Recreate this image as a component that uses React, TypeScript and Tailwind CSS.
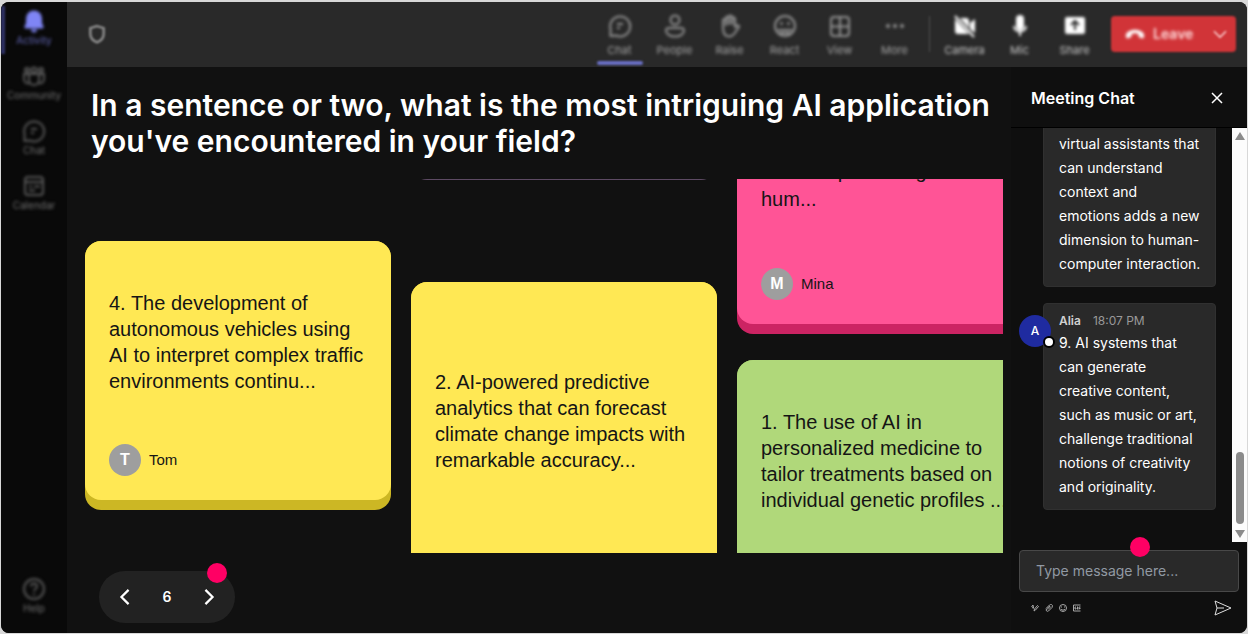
import { ReactNode } from "react";

type NoteProps = {
  text: string;
  author?: string;
  face: string;
  edge: string;
  className?: string;
  leading?: string;
};

function Note({ text, author, face, edge, className = "", leading = "leading-[26px]" }: NoteProps) {
  return (
    <article className={`shrink-0 rounded-[16px] pb-[10px] ${edge} ${className}`}>
      <div className={`flex h-full flex-col rounded-[16px] p-6 ${face}`}>
        <div className="flex flex-1 items-center">
          <p className={`text-xl text-[#151515] ${leading}`}>{text}</p>
        </div>
        <div className="mt-[26px] flex min-h-8 items-center gap-2 text-[15px] text-[#151515]">
          {author && (
            <>
              <span className="flex size-8 items-center justify-center rounded-full bg-[#9e9e9e] text-base font-bold text-white">
                {author[0]}
              </span>
              {author}
            </>
          )}
        </div>
      </div>
    </article>
  );
}

function BellIcon() {
  return (
    <svg viewBox="0 0 24 24" className="size-6" fill="currentColor" aria-hidden="true">
      <path d="M12 1.500a8 8 0 0 0-8 8v4.500l-1.500 3.500c-.4 1 .2 2 1.200 2h16.600c1 0 1.600-1 1.200-2L20 14V9.500a8 8 0 0 0-8-8Z" />
      <path d="M9 20.500h6a3 3 0 0 1-6 0Z" />
    </svg>
  );
}

function CommunityIcon() {
  return (
    <svg viewBox="0 0 24 24" className="size-6" fill="none" stroke="currentColor" strokeWidth="2" aria-hidden="true">
      <circle cx="5" cy="6" r="2" />
      <circle cx="12" cy="6" r="2.500" />
      <circle cx="19" cy="6" r="2" />
      <path d="M7 10h10v6a5 5 0 0 1-10 0ZM7 10H2v5c0 3 2 5 5.500 4M17 10h5v5c0 3-2 5-5.500 4" />
    </svg>
  );
}

function CalendarIcon() {
  return (
    <svg viewBox="0 0 24 24" className="size-6" fill="none" stroke="currentColor" strokeWidth="2" aria-hidden="true">
      <rect x="3" y="3" width="18" height="18" rx="3" />
      <path d="M3 8h18M7 12.500h3M12 12.500h6M7 16.500h6" />
    </svg>
  );
}

function HelpIcon() {
  return (
    <svg viewBox="0 0 24 24" className="size-6" fill="none" stroke="currentColor" strokeWidth="2" aria-hidden="true">
      <circle cx="12" cy="12" r="10" />
      <path d="M9 9.500c0-4 6-4 6 0 0 2.500-3 2-3 5M12 16.500v2" />
    </svg>
  );
}

function ChatIcon() {
  return (
    <svg viewBox="0 0 24 24" className="size-6" fill="none" stroke="currentColor" strokeWidth="2" strokeLinejoin="round" aria-hidden="true">
      <path d="M2.500 22 2.500 15A10 10 0 1 1 8 21.500Z" />
      <path d="M9 10h6M9 14h3" />
    </svg>
  );
}

function PeopleIcon() {
  return (
    <svg viewBox="0 0 24 24" className="size-6" fill="none" stroke="currentColor" strokeWidth="2" aria-hidden="true">
      <circle cx="12" cy="6" r="4.500" />
      <path d="M5.500 14h13a2.500 2.500 0 0 1 2.500 2.500C21 20 17 22.500 12 22.500S3 20 3 16.500A2.500 2.500 0 0 1 5.500 14Z" />
    </svg>
  );
}

function HandIcon() {
  return (
    <svg viewBox="0 0 24 24" className="size-6" fill="none" stroke="currentColor" strokeWidth="2" strokeLinejoin="round" strokeLinecap="round" aria-hidden="true">
      <path d="M5 13V6.500a1.500 1.500 0 0 1 3 0V4a1.500 1.500 0 0 1 3 0V3a1.500 1.500 0 0 1 3 0v2a1.500 1.500 0 0 1 3 0v8l2-1.500c1-.7 2.500.3 2 1.500l-5 7c-1.500 2-3 2.500-5 2.500-4 0-6-3-6-9.500Z" />
      <path d="M8 6v5M11 4v6M14 5v5" />
    </svg>
  );
}

function ReactIcon() {
  return (
    <svg viewBox="0 0 24 24" className="size-6" fill="none" stroke="currentColor" strokeWidth="2" aria-hidden="true">
      <circle cx="12" cy="12" r="10" />
      <path d="M5 16h14M7 19h10" />
      <circle cx="8.500" cy="9.500" r=".5" fill="currentColor" />
      <circle cx="15.500" cy="9.500" r=".5" fill="currentColor" />
    </svg>
  );
}

function ViewIcon() {
  return (
    <svg viewBox="0 0 24 24" className="size-6" fill="none" stroke="currentColor" strokeWidth="2" aria-hidden="true">
      <rect x="3" y="3" width="18" height="19" rx="3" />
      <path d="M12 3v19M3 12.500h18" />
    </svg>
  );
}

function MoreIcon() {
  return (
    <svg viewBox="0 0 24 24" className="size-6" fill="currentColor" aria-hidden="true">
      <circle cx="5" cy="12" r="2" />
      <circle cx="12" cy="12" r="2" />
      <circle cx="19" cy="12" r="2" />
    </svg>
  );
}

function CameraIcon() {
  return (
    <svg viewBox="0 0 24 24" className="size-6" fill="currentColor" aria-hidden="true">
      <path d="M2 2 21 23" stroke="currentColor" strokeWidth="2" />
      <path d="M7 4h6a3 3 0 0 1 3 3v7ZM2 5l14 15H5a3 3 0 0 1-3-3ZM17 9l5-4v14l-5-4Z" />
    </svg>
  );
}

function MicIcon() {
  return (
    <svg viewBox="0 0 24 24" className="size-6" fill="currentColor" aria-hidden="true">
      <rect x="8" y="1" width="8" height="15" rx="4" />
      <path d="M6 12c0 7 12 7 12 0M12 17v5" fill="none" stroke="currentColor" strokeWidth="2" />
    </svg>
  );
}

function ShareIcon() {
  return (
    <svg viewBox="0 0 24 24" className="size-6" fill="none" aria-hidden="true">
      <rect x="2" y="3" width="20" height="17" rx="2" fill="currentColor" />
      <path d="M12 16V7M8 11l4-4 4 4" stroke="#292929" strokeWidth="2" />
    </svg>
  );
}

function ToolButton({ label, icon, active = false, bright = false }: { label: string; icon: ReactNode; active?: boolean; bright?: boolean }) {
  return (
    <button className="relative flex h-full w-[55px] flex-col items-center pt-3 blur-[1px]">
      <span className={`blur-[1px] ${bright ? "text-[#ffffff]" : "text-[#949494]"}`}>{icon}</span>
      <span className={`mt-1 text-[11px] leading-4 blur-[1px] ${bright ? "text-[#c8c8c8]" : "text-[#a4a4a4]"}`}>{label}</span>
      {active && <span className="absolute bottom-px h-1 w-[46px] rounded-sm bg-[#6a6fc4]" />}
    </button>
  );
}

function RailButton({ label, icon, active = false }: { label: string; icon: ReactNode; active?: boolean }) {
  return (
    <button className={`flex h-[55px] w-full flex-col items-center pt-[7px] blur-[1px] ${active ? "text-[#7f85f5]" : "text-[#585858]"}`}>
      <span className="blur-[1px]">{icon}</span>
      <span className={`text-[10px] leading-[14px] blur-[1px] ${active ? "text-[#6266b5]" : "text-[#727272]"}`}>{label}</span>
    </button>
  );
}

export default function App() {
  return (
    <div className="min-h-screen bg-[#d8d8d8] px-px pt-0.5 pb-px font-['Inter',sans-serif]">
      <div className="flex h-[calc(100vh-3px)] overflow-hidden rounded-lg bg-[#111111] text-white">
        <nav aria-label="Apps" className="relative flex w-[66px] shrink-0 flex-col bg-[#090909]">
          <span className="absolute top-1 left-0 h-12 w-1 bg-[#2f3165] blur-[1px]" />
          <RailButton active label="Activity" icon={<BellIcon />} />
          <RailButton label="Community" icon={<CommunityIcon />} />
          <RailButton label="Chat" icon={<ChatIcon />} />
          <RailButton label="Calendar" icon={<CalendarIcon />} />
          <div className="mt-auto pb-2">
            <RailButton label="Help" icon={<HelpIcon />} />
          </div>
        </nav>

        <div className="flex min-w-0 flex-1 flex-col">
          <header className="flex h-[65px] shrink-0 items-center bg-[#292929] pr-[11px] pb-px pl-5">
            <svg viewBox="0 0 24 24" className="size-5 text-[#8c8c8c] blur-[1px]" fill="none" stroke="currentColor" strokeWidth="3" aria-hidden="true">
              <path d="M12 2.500 20 5v7c0 5-3 8-8 10-5-2-8-5-8-10V5Z" />
            </svg>
            <div className="ml-auto flex h-full items-center">
              <ToolButton active label="Chat" icon={<ChatIcon />} />
              <ToolButton label="People" icon={<PeopleIcon />} />
              <ToolButton label="Raise" icon={<HandIcon />} />
              <ToolButton label="React" icon={<ReactIcon />} />
              <ToolButton label="View" icon={<ViewIcon />} />
              <ToolButton label="More" icon={<MoreIcon />} />
              <span className="mx-[7px] h-9 w-px bg-[#505050] blur-[1px]" />
              <ToolButton bright label="Camera" icon={<CameraIcon />} />
              <ToolButton bright label="Mic" icon={<MicIcon />} />
              <ToolButton bright label="Share" icon={<ShareIcon />} />
            </div>
            <button className="ml-[9px] flex h-9 w-[125px] items-center rounded bg-[#d13438] pr-2 pl-[14px] text-[#ffdede] blur-[1px]">
              <svg viewBox="0 0 24 24" className="size-5 blur-[1px]" fill="#ffffff" aria-hidden="true">
                <path d="M12 7c6 0 11 3 11 7 0 3-1 3-3 3-3-1-4-1-4-5-3-1-5-1-8 0 0 4-1 4-4 5-2 0-3 0-3-3 0-4 5-7 11-7Z" />
              </svg>
              <span className="ml-2 text-sm font-semibold blur-[1px]">Leave</span>
              <svg viewBox="0 0 24 24" className="ml-auto size-4" fill="none" stroke="currentColor" strokeWidth="2" aria-hidden="true">
                <path d="m3 8 9 9 9-9" />
              </svg>
            </button>
          </header>

          <div className="flex min-h-0 flex-1">
            <main className="flex min-w-0 flex-1 flex-col">
              <h1 className="pt-5 pl-6 text-[30px] leading-9 font-semibold">
                In a sentence or two, what is the most intriguing AI application you've encountered in your field?
              </h1>
              <section className="mt-5 mr-2 ml-[18px] flex min-h-0 flex-1 gap-5 overflow-hidden font-['Liberation_Sans',sans-serif]">
                <div className="w-[306px] shrink-0 pt-[62px]">
                  <Note
                    className="h-[269px]"
                    face="bg-[#ffe854]"
                    edge="bg-[#ccb724]"
                    author="Tom"
                    text="4. The development of autonomous vehicles using AI to interpret complex traffic environments continu..."
                  />
                </div>
                <div className="w-[306px] shrink-0">
                  <div className="-mt-6 h-[25px] rounded-b-[16px] bg-[#5d4a63]" />
                  <Note
                    className="mt-[102px] h-[345px]"
                    face="bg-[#ffe854]"
                    edge="bg-[#ccb724]"
                    text="2. AI-powered predictive analytics that can forecast climate change impacts with remarkable accuracy..."
                  />
                </div>
                <div className="w-[306px] shrink-0">
                  <Note
                    className="-mt-[75px] h-[230px]"
                    leading="leading-7"
                    face="bg-[#ff5496]"
                    edge="bg-[#cc2463]"
                    author="Mina"
                    text="that can produce genuine hum..."
                  />
                  <Note
                    className="mt-[26px] h-[269px]"
                    face="bg-[#b0d87a]"
                    edge="bg-[#82a850]"
                    text="1. The use of AI in personalized medicine to tailor treatments based on individual genetic profiles ..."
                  />
                </div>
              </section>
              <div className="shrink-0 pt-[18px] pb-[10px] pl-8">
                <div className="relative flex h-[52px] w-[136px] items-center justify-between rounded-full bg-[#222222] px-4">
                  <button aria-label="Previous" className="p-1">
                    <svg viewBox="0 0 12 18" className="h-4 w-3" fill="none" stroke="currentColor" strokeWidth="2.500" aria-hidden="true">
                      <path d="m10 1-8 8 8 8" />
                    </svg>
                  </button>
                  <span className="text-sm font-semibold">6</span>
                  <button aria-label="Next" className="p-1">
                    <svg viewBox="0 0 12 18" className="h-4 w-3" fill="none" stroke="currentColor" strokeWidth="2.500" aria-hidden="true">
                      <path d="m2 1 8 8-8 8" />
                    </svg>
                  </button>
                  <span className="absolute -top-2 right-2 size-5 rounded-full bg-[#ff0064]" />
                </div>
              </div>
            </main>

            <aside className="flex w-[236px] shrink-0 flex-col bg-[#0f0f0f]">
              <div className="flex h-[61px] shrink-0 items-center justify-between border-b border-black pt-0.5 pr-6 pl-5">
                <h2 className="text-base font-semibold">Meeting Chat</h2>
                <button aria-label="Close chat">
                  <svg viewBox="0 0 12 12" className="size-3" fill="none" stroke="currentColor" strokeWidth="1.500" aria-hidden="true">
                    <path d="m1 1 10 10M11 1 1 11" />
                  </svg>
                </button>
              </div>
              <div className="flex min-h-0 flex-1">
                <div className="flex min-w-0 flex-1 flex-col justify-end gap-4 overflow-hidden pb-8 text-sm leading-6">
                  <p className="mr-4 ml-8 shrink-0 rounded border border-[#303030] bg-[#292929] pt-6 pr-[14px] pb-[10px] pl-[15px]">
                    virtual assistants that can understand context and emotions adds a new dimension to human-computer interaction.
                  </p>
                  <article className="relative mr-4 ml-8 shrink-0 rounded border border-[#303030] bg-[#292929] pt-[7px] pr-[14px] pb-[10px] pl-[15px]">
                    <span className="absolute top-[11px] -left-[25px] flex size-8 items-center justify-center rounded-full bg-[#1f2ba0] text-xs font-medium">
                      A
                      <span className="absolute -right-1 -bottom-px size-3 rounded-full border-2 border-black bg-white" />
                    </span>
                    <div className="flex gap-3 text-xs leading-5 text-[#999999]">
                      <strong className="font-semibold text-[#d0d0d0]">Alia</strong>
                      <time>18:07 PM</time>
                    </div>
                    <p>
                      9. AI systems that can generate creative content, such as music or art, challenge traditional notions of creativity and originality.
                    </p>
                  </article>
                </div>
                <div className="flex w-[15px] shrink-0 flex-col items-center bg-[#fcfcfc] py-1" aria-hidden="true">
                  <svg viewBox="0 0 10 8" className="h-2 w-[10px]" fill="#8b8b8b"><path d="m5 0 5 8H0Z" /></svg>
                  <span className="mt-auto h-[72px] w-2 rounded-full bg-[#8b8b8b]" />
                  <svg viewBox="0 0 10 8" className="mt-[6px] h-2 w-[10px]" fill="#8b8b8b"><path d="m5 8 5-8H0Z" /></svg>
                </div>
              </div>
              <form className="relative shrink-0 px-2 pt-2 pb-[17px]">
                <input
                  aria-label="Message"
                  placeholder="Type message here..."
                  className="block h-[42px] w-full rounded border border-[#484848] bg-[#292929] px-4 pb-0.5 text-sm placeholder:text-[#9199a3]"
                />
                <span className="absolute -top-[5px] left-[119px] size-5 rounded-full bg-[#ff0064]" />
                <div className="mt-2 flex items-center gap-[6px] pr-[7px] pl-3">
                  <button type="button" aria-label="Format">
                    <svg viewBox="0 0 16 16" className="size-2" fill="none" stroke="#a8a8a8" strokeWidth="2" aria-hidden="true">
                      <path d="M1 6 4 2l1 7M2 8l4-2M6 14l1-4 6-7 2 2-6 7-3 2Z" />
                    </svg>
                  </button>
                  <button type="button" aria-label="Attach">
                    <svg viewBox="0 0 16 16" className="size-2" fill="none" stroke="#a8a8a8" strokeWidth="2" aria-hidden="true">
                      <path d="M2 9 9 2c4-3 8 1 5 5l-7 7c-3 2-6-1-4-4l7-6M6 11l6-6" />
                    </svg>
                  </button>
                  <button type="button" aria-label="Emoji">
                    <svg viewBox="0 0 16 16" className="size-2" fill="none" stroke="#a8a8a8" strokeWidth="2" aria-hidden="true">
                      <circle cx="8" cy="8" r="7" />
                      <path d="M4 10c2 3 6 3 8 0M5 5v2M11 5v2" />
                    </svg>
                  </button>
                  <button type="button" aria-label="GIF">
                    <svg viewBox="0 0 16 16" className="size-2" fill="none" stroke="#a8a8a8" strokeWidth="2" aria-hidden="true">
                      <path d="M15 2H1v12h14M6 6H4v4h2V8M9 5v6M12 11V6h3M12 9h3" />
                    </svg>
                  </button>
                  <button type="submit" aria-label="Send" className="ml-auto">
                    <svg viewBox="0 0 18 16" className="h-4 w-[18px]" fill="none" stroke="#e0e0e0" strokeLinejoin="round" aria-hidden="true">
                      <path d="m1 1 16 7-16 7 2-7ZM3 8h7" />
                    </svg>
                  </button>
                </div>
              </form>
            </aside>
          </div>
        </div>
      </div>
    </div>
  );
}
